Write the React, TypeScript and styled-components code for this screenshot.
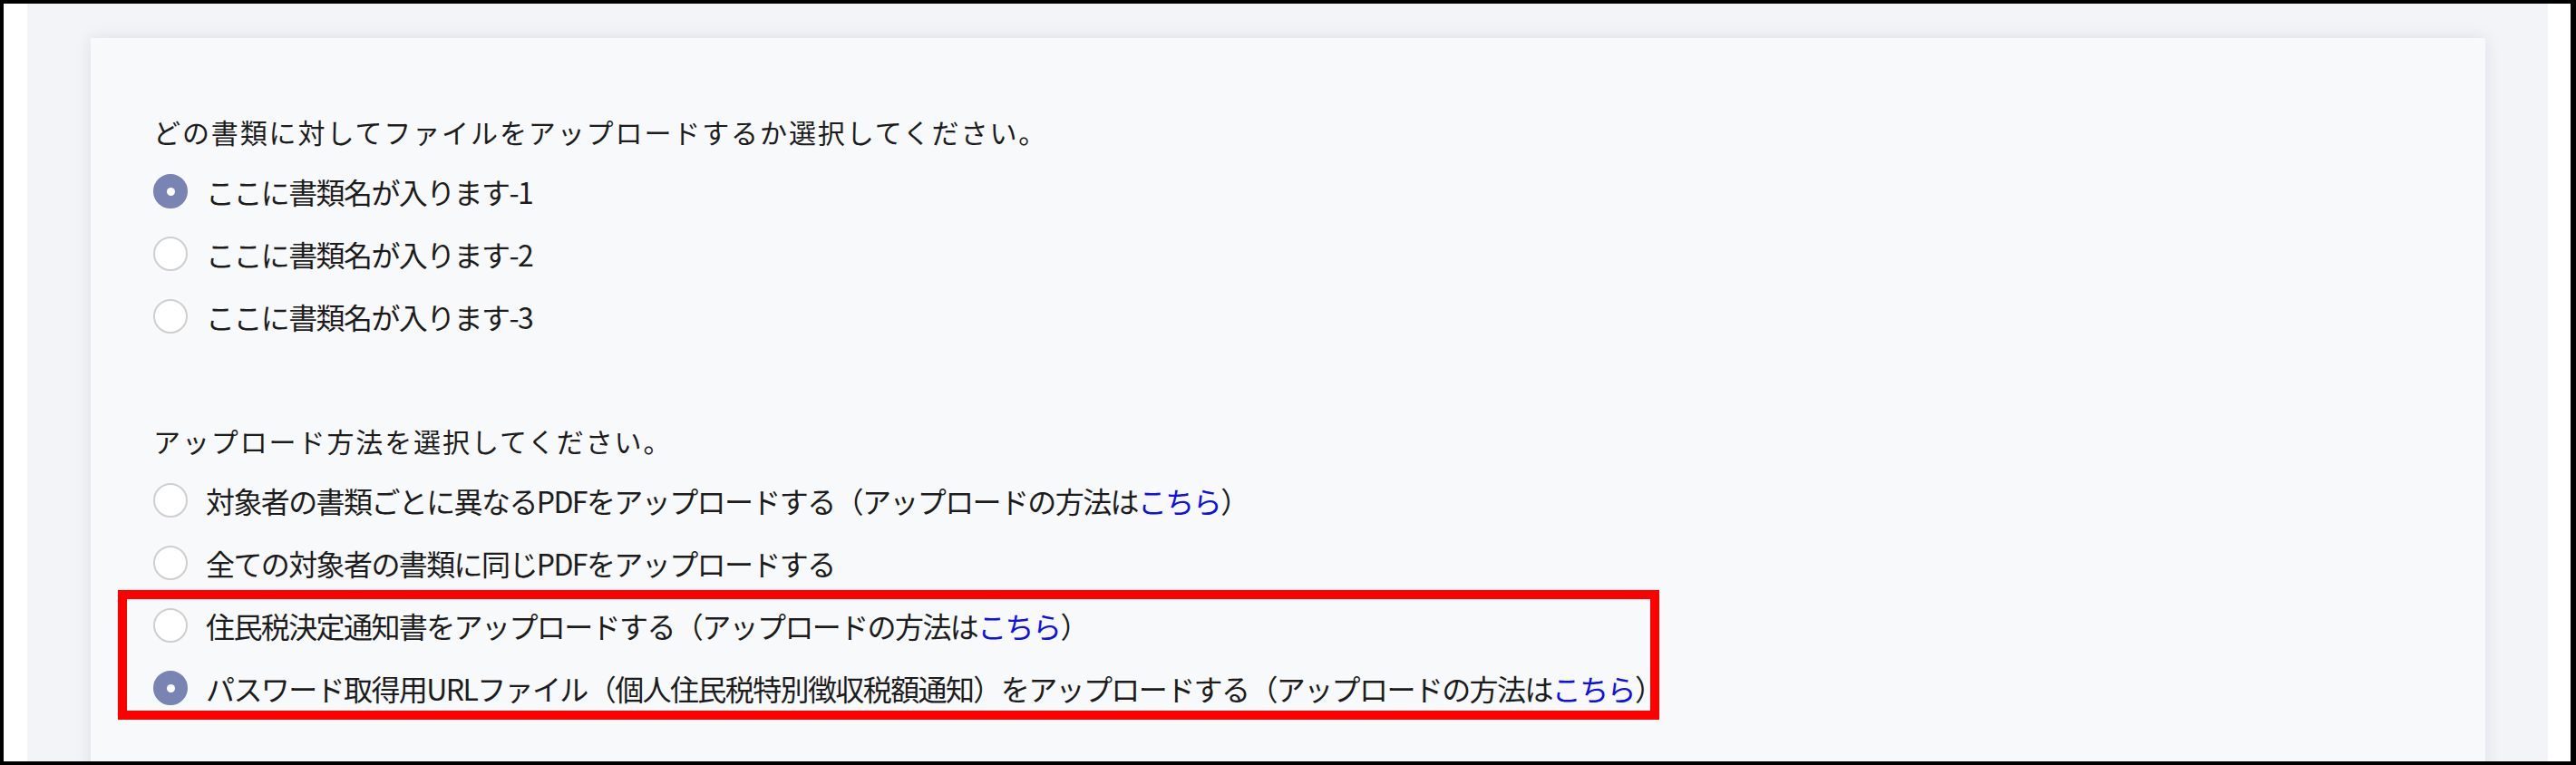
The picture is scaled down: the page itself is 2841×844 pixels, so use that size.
import styled, { createGlobalStyle } from "styled-components";

const GlobalStyle = createGlobalStyle`
  html, body {
    margin: 0;
    padding: 0;
    background: #ffffff;
  }
  body {
    font-family: "Noto Sans CJK JP", "Noto Sans", sans-serif;
    color: #1c1c1c;
  }
  * {
    box-sizing: border-box;
  }
`;

type Option = {
  label: string;
  checked?: boolean;
  withLink?: boolean;
};

const documentOptions: Option[] = [
  { label: "ここに書類名が入ります-1", checked: true },
  { label: "ここに書類名が入ります-2" },
  { label: "ここに書類名が入ります-3" },
];

const methodOptions: Option[] = [
  { label: "対象者の書類ごとに異なるPDFをアップロードする", withLink: true },
  { label: "全ての対象者の書類に同じPDFをアップロードする" },
];

const highlightedOptions: Option[] = [
  { label: "住民税決定通知書をアップロードする", withLink: true },
  {
    label: "パスワード取得用URLファイル（個人住民税特別徴収税額通知）をアップロードする",
    withLink: true,
    checked: true,
  },
];

function RadioRow({ option }: { option: Option }) {
  return (
    <Row>
      <RadioMark $checked={!!option.checked} />
      <RowText>
        {option.label}
        {option.withLink && (
          <>
            （アップロードの方法は<Link href="#">こちら</Link>）
          </>
        )}
      </RowText>
    </Row>
  );
}

export default function App() {
  return (
    <>
      <GlobalStyle />
      <Frame>
        <Panel>
          <Card>
            <Section>
              <Heading>どの書類に対してファイルをアップロードするか選択してください。</Heading>
              <RowList>
                {documentOptions.map((o, i) => (
                  <RadioRow key={i} option={o} />
                ))}
              </RowList>
            </Section>
            <Section>
              <Heading>アップロード方法を選択してください。</Heading>
              <RowList>
                {methodOptions.map((o, i) => (
                  <RadioRow key={i} option={o} />
                ))}
                {/* annotation frame round the last two choices */}
                <Highlight>
                  {highlightedOptions.map((o, i) => (
                    <RadioRow key={i} option={o} />
                  ))}
                </Highlight>
              </RowList>
            </Section>
          </Card>
        </Panel>
      </Frame>
    </>
  );
}

const Frame = styled.div`
  display: flex;
  height: 844px;
  overflow: hidden;
  background: #ffffff;
  border: 4px solid #000000;
  border-right-width: 6px;
  padding: 0 25px 0 26px;
`;

const Panel = styled.div`
  flex: 1;
  display: flex;
  background: #f3f4f8;
  padding: 38px 69px 0 70px;
`;

const Card = styled.div`
  flex: 1;
  display: flex;
  flex-direction: column;
  gap: 98px;
  background: #f8f9fb;
  box-shadow: 0 0 18px rgba(20, 24, 60, 0.09);
  padding: 83px 69px 0;
  min-height: 900px;
`;

const Section = styled.section`
  display: flex;
  flex-direction: column;
  gap: 27px;
`;

const Heading = styled.div`
  font-size: 30px;
  line-height: 40px;
  letter-spacing: 1.9px;
  white-space: nowrap;
`;

const RowList = styled.div`
  display: flex;
  flex-direction: column;
  gap: 31px;
`;

const Highlight = styled.div`
  display: flex;
  flex-direction: column;
  gap: 31px;
  width: 1700px;
  margin: -20px 0 0 -39px;
  padding: 10px 0 6px 29px;
  border: 10px solid #ff0000;
`;

const Row = styled.label`
  display: flex;
  align-items: center;
  gap: 20px;
  height: 38px;
  cursor: pointer;
`;

const RadioMark = styled.span<{ $checked: boolean }>`
  flex: none;
  position: relative;
  width: 38px;
  height: 38px;
  border-radius: 50%;
  background: ${(p) => (p.$checked ? "#7a84b2" : "#ffffff")};
  border: 2px solid ${(p) => (p.$checked ? "#7a84b2" : "#cfcfcf")};

  &::after {
    content: "";
    display: ${(p) => (p.$checked ? "block" : "none")};
    position: absolute;
    left: 50%;
    top: 50%;
    width: 9px;
    height: 9px;
    margin: -4.5px 0 0 -4.5px;
    border-radius: 50%;
    background: #ffffff;
  }
`;

const RowText = styled.span`
  font-size: 32px;
  line-height: 38px;
  letter-spacing: -1.6px;
  white-space: nowrap;
`;

const Link = styled.a`
  color: #1010e6;
  text-decoration: none;
`;
